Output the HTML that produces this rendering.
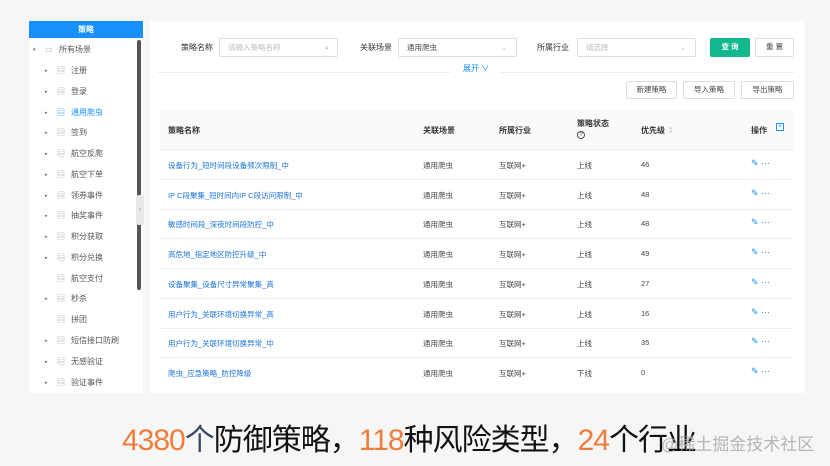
<!DOCTYPE html>
<html><head><meta charset="utf-8"><style>
*{margin:0;padding:0;box-sizing:border-box}
body{width:830px;height:466px;background:#f6f6f6;font-family:"Liberation Sans","Noto Sans CJK SC",sans-serif;position:relative;overflow:hidden;font-size:8px;color:#333}
.a{position:absolute}
.left{left:29px;top:21px;width:114px;height:372px;background:#fff}
.lh{left:29px;top:21px;width:114px;height:17px;background:#1890ff;color:#fff;text-align:center;line-height:17px;font-size:8px;font-weight:bold}
.tr{position:absolute;font-size:8px;color:#555;line-height:10px}
.tr i{position:absolute;left:-14px;top:0;font-style:normal;color:#999;font-size:8px}
.tr b{position:absolute;left:-26px;top:0;font-weight:normal;font-size:5px;color:#666}
.main{left:150px;top:21px;width:655px;height:372px;background:#fff}
.inp{position:absolute;height:19px;border:1px solid #ddd;background:#fff;font-size:7.5px;color:#bbb;line-height:17px;padding-left:8px;border-radius:2px}
.btn{position:absolute;height:18px;border:1px solid #ddd;background:#fff;font-size:7.5px;color:#444;text-align:center;line-height:16px;border-radius:2px}
.lab{position:absolute;font-size:8px;color:#333}
.th{position:absolute;font-size:8px;color:#333;font-weight:bold}
.row{position:absolute;left:160px;width:633px;height:30px;border-bottom:1px solid #eee}
.row span{position:absolute;top:10px;font-size:7.5px;color:#444}
.row .n{left:8px;color:#1a73d9}
.row .op{left:591px;color:#1890ff;top:8px;font-size:9px}
.bottom{left:122px;top:421px;font-size:30px;color:#111;letter-spacing:-1px;line-height:40px}
.o{color:#ef7d3b}
</style></head><body>
<div class="a left"></div>
<div class="a lh">策略</div>
<div class="a" style="left:137px;top:40px;width:4px;height:250px;background:#555;border-radius:2px"></div>
<div class="a" style="left:136px;top:195px;width:8px;height:30px;background:#e8e8e8;border-radius:3px;font-size:7px;color:#888;line-height:30px;text-align:center">‹</div>
<div class="tr" style="left:59px;top:45px"><b style="left:-26px">▾</b><i style="color:#aaa">▭</i>所有场景</div>
<div class="tr" style="left:71px;top:66px"><b>▸</b><i>▤</i>注册</div>
<div class="tr" style="left:71px;top:87px"><b>▸</b><i>▤</i>登录</div>
<div class="tr" style="left:71px;top:108px;color:#1890ff"><b>▸</b><i style="color:#1890ff">▤</i>通用爬虫</div>
<div class="tr" style="left:71px;top:128px"><b>▸</b><i>▤</i>签到</div>
<div class="tr" style="left:71px;top:149px"><b>▸</b><i>▤</i>航空反爬</div>
<div class="tr" style="left:71px;top:170px"><b>▸</b><i>▤</i>航空下单</div>
<div class="tr" style="left:71px;top:191px"><b>▸</b><i>▤</i>领券事件</div>
<div class="tr" style="left:71px;top:211px"><b>▸</b><i>▤</i>抽奖事件</div>
<div class="tr" style="left:71px;top:232px"><b>▸</b><i>▤</i>积分获取</div>
<div class="tr" style="left:71px;top:253px"><b>▸</b><i>▤</i>积分兑换</div>
<div class="tr" style="left:71px;top:274px"><i>▤</i>航空支付</div>
<div class="tr" style="left:71px;top:294px"><b>▸</b><i>▤</i>秒杀</div>
<div class="tr" style="left:71px;top:315px"><i>▤</i>拼团</div>
<div class="tr" style="left:71px;top:336px"><b>▸</b><i>▤</i>短信接口防刷</div>
<div class="tr" style="left:71px;top:357px"><b>▸</b><i>▤</i>无感验证</div>
<div class="tr" style="left:71px;top:378px"><b>▸</b><i>▤</i>验证事件</div>

<div class="a main"></div>
<div class="lab" style="left:181px;top:42px">策略名称</div>
<div class="inp" style="left:219px;top:38px;width:119px">请输入策略名称<span style="position:absolute;right:8px;color:#999">⌕</span></div>
<div class="lab" style="left:360px;top:42px">关联场景</div>
<div class="inp" style="left:398px;top:38px;width:119px;color:#444">通用爬虫<span style="position:absolute;right:9px;color:#bbb">⌄</span></div>
<div class="lab" style="left:537px;top:42px">所属行业</div>
<div class="inp" style="left:577px;top:38px;width:119px">请选择<span style="position:absolute;right:9px;color:#bbb">⌄</span></div>
<div class="btn" style="left:710px;top:38px;width:40px;height:19px;background:#14b88f;border-color:#14b88f;color:#fff;font-weight:bold">查 询</div>
<div class="btn" style="left:755px;top:38px;width:39px;height:19px">重 置</div>
<div class="a" style="left:158px;top:72px;width:292px;height:1px;background:#eee"></div>
<div class="a" style="left:500px;top:72px;width:294px;height:1px;background:#eee"></div>
<div class="a" style="left:463px;top:63px;font-size:8px;color:#1890ff">展开 ∨</div>
<div class="btn" style="left:626px;top:81px;width:51px">新建策略</div>
<div class="btn" style="left:683px;top:81px;width:52px">导入策略</div>
<div class="btn" style="left:741px;top:81px;width:53px">导出策略</div>
<div class="a" style="left:160px;top:110px;width:633px;height:40px;background:#fafafa;border-bottom:1px solid #eee"></div>
<div class="th" style="left:168px;top:125px">策略名称</div>
<div class="th" style="left:423px;top:125px">关联场景</div>
<div class="th" style="left:499px;top:125px">所属行业</div>
<div class="th" style="left:577px;top:118px">策略状态</div>
<div class="a" style="left:577px;top:131px;width:8px;height:8px;border:1px solid #555;border-radius:50%;font-size:6px;line-height:6px;text-align:center">?</div>
<div class="th" style="left:641px;top:125px">优先级 <span style="color:#ccc;font-weight:normal">⇕</span></div>
<div class="th" style="left:751px;top:125px">操作</div>
<div class="a" style="left:776px;top:123px;width:8px;height:8px;border:1px solid #1890ff;font-size:6px;line-height:6px;text-align:center;color:#1890ff">+</div>

<div class="row" style="top:150px"><span class="n">设备行为_短时间段设备频次限制_中</span><span style="left:263px">通用爬虫</span><span style="left:339px">互联网+</span><span style="left:417px">上线</span><span style="left:481px">46</span><span class="op">✎ ···</span></div>
<div class="row" style="top:180px"><span class="n">IP C段聚集_短时间内IP C段访问限制_中</span><span style="left:263px">通用爬虫</span><span style="left:339px">互联网+</span><span style="left:417px">上线</span><span style="left:481px">48</span><span class="op">✎ ···</span></div>
<div class="row" style="top:209px"><span class="n">敏感时间段_深夜时间段防控_中</span><span style="left:263px">通用爬虫</span><span style="left:339px">互联网+</span><span style="left:417px">上线</span><span style="left:481px">48</span><span class="op">✎ ···</span></div>
<div class="row" style="top:239px"><span class="n">高危地_指定地区防控升级_中</span><span style="left:263px">通用爬虫</span><span style="left:339px">互联网+</span><span style="left:417px">上线</span><span style="left:481px">49</span><span class="op">✎ ···</span></div>
<div class="row" style="top:269px"><span class="n">设备聚集_设备尺寸异常聚集_高</span><span style="left:263px">通用爬虫</span><span style="left:339px">互联网+</span><span style="left:417px">上线</span><span style="left:481px">27</span><span class="op">✎ ···</span></div>
<div class="row" style="top:299px"><span class="n">用户行为_关联环境切换异常_高</span><span style="left:263px">通用爬虫</span><span style="left:339px">互联网+</span><span style="left:417px">上线</span><span style="left:481px">16</span><span class="op">✎ ···</span></div>
<div class="row" style="top:328px"><span class="n">用户行为_关联环境切换异常_中</span><span style="left:263px">通用爬虫</span><span style="left:339px">互联网+</span><span style="left:417px">上线</span><span style="left:481px">35</span><span class="op">✎ ···</span></div>
<div class="row" style="top:358px;border:none"><span class="n">爬虫_应急策略_防控降级</span><span style="left:263px">通用爬虫</span><span style="left:339px">互联网+</span><span style="left:417px">下线</span><span style="left:481px">0</span><span class="op">✎ ···</span></div>

<div class="a bottom"><span class="o">4380</span><span style="color:#3a4a66">个</span>防御策略，<span class="o">118</span>种风险类型，<span class="o">24</span>个行业</div>
<div class="a" style="left:661px;top:430px;font-size:17px;color:#aaa;opacity:.85">@稀土掘金技术社区</div>
</body></html>
